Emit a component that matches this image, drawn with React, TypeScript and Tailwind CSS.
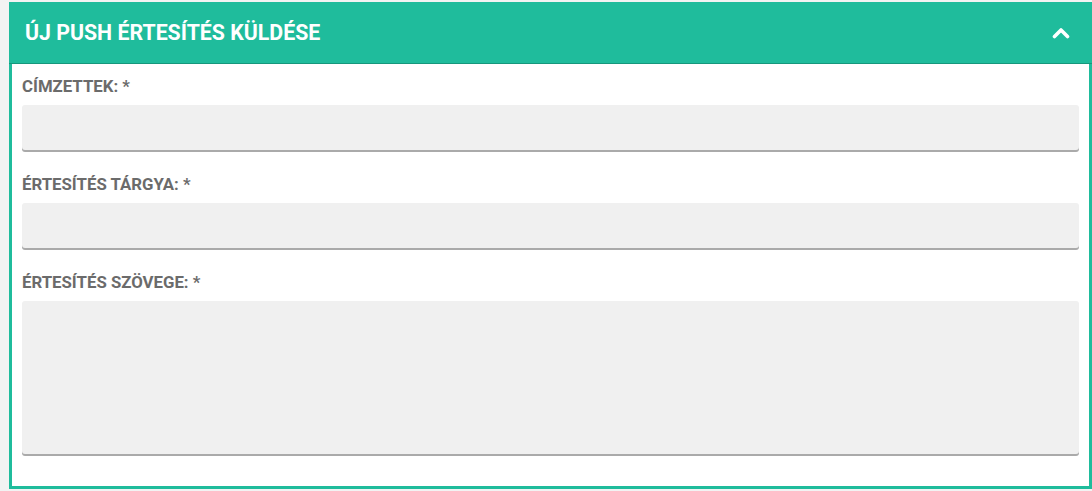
export default function App() {
  const fields = [
    { label: "CÍMZETTEK: *", tall: false },
    { label: "ÉRTESÍTÉS TÁRGYA: *", tall: false },
    { label: "ÉRTESÍTÉS SZÖVEGE: *", tall: true },
  ];

  return (
    <div
      className="h-[491px] w-[1092px] bg-[#f2f3f3] pl-[9px] pt-[2px]"
      style={{ fontFamily: "Roboto, 'Open Sans', sans-serif" }}
    >
      <div className="h-[487px] w-[1083px] border-[3px] border-t-0 border-[#1fbc9c] bg-white">
        {/* Header */}
        <div className="-mx-[3px] flex h-[61px] items-center justify-between bg-[#1fbc9c] pl-[16px] pr-[22px] shadow-[0_1px_0_#16977c]">
          <h2 className="text-[21.3px] font-bold text-white">
            ÚJ PUSH ÉRTESÍTÉS KÜLDÉSE
          </h2>
          <svg width="18" height="12" viewBox="0 0 18 12" fill="none">
            <path
              d="M2.5 9.5L9 3l6.5 6.5"
              stroke="white"
              strokeWidth="3.6"
              strokeLinecap="round"
              strokeLinejoin="round"
            />
          </svg>
        </div>

        {/* Form */}
        <div className="flex flex-col px-[10px] pt-[13px]">
          {fields.map((f) => (
            <div key={f.label} className="mb-[24px] flex flex-col">
              <label className="mb-[9px] text-[16.8px] font-bold leading-[20px] text-[#6b6b6b]">
                {f.label}
              </label>
              <div
                className={
                  f.tall
                    ? "h-[153px] rounded-[3px] bg-[#f0f0f0] shadow-[0_2px_0_#aaaaaa]"
                    : "h-[45px] rounded-[3px] bg-[#f0f0f0] shadow-[0_2px_0_#aaaaaa]"
                }
              />
            </div>
          ))}
        </div>
      </div>
    </div>
  );
}
